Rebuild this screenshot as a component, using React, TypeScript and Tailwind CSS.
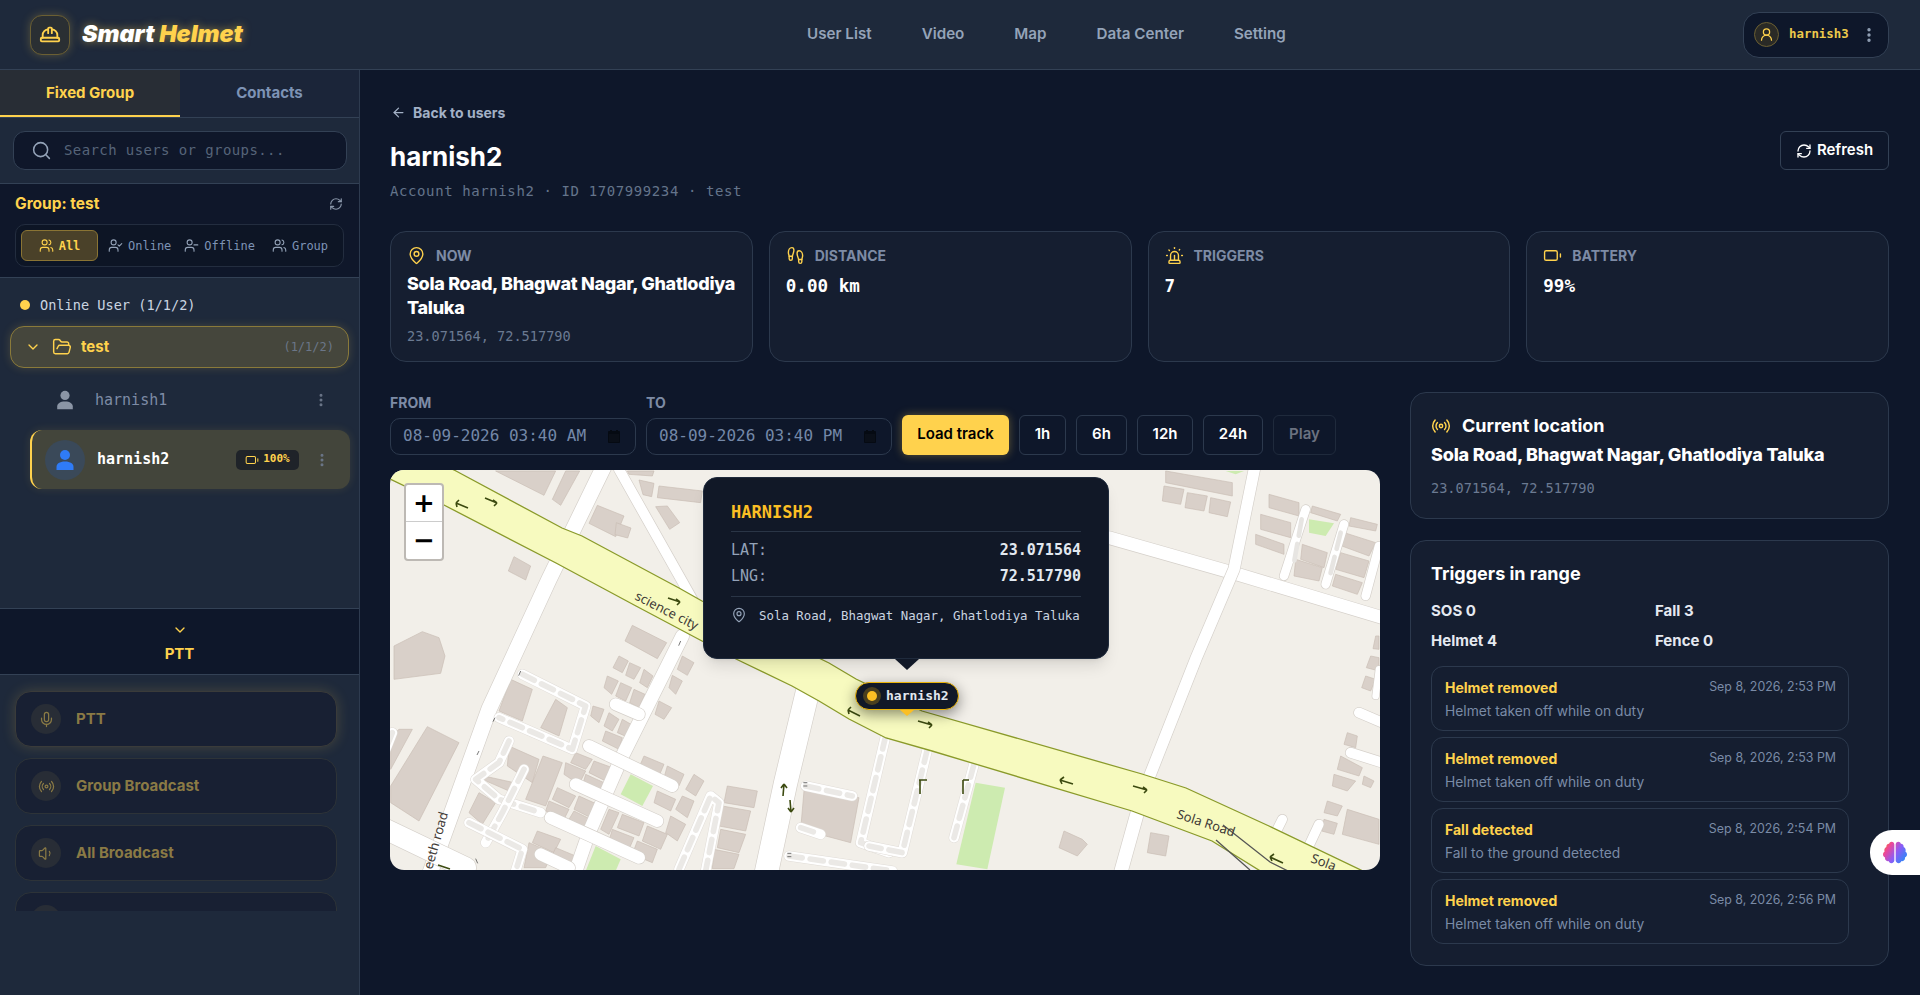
import React from "react";
import {
  ArrowLeft, Battery, ChevronDown, EllipsisVertical, FolderOpen, Footprints, HardHat, MapPin, Mic, Radio,
  RefreshCw, Search, Siren, User, UserCheck, UserMinus, UserRound, Users, Volume1,
} from "lucide-react";
import { FaBrain } from "react-icons/fa";

const mono = "font-['DejaVu_Sans_Mono','Liberation_Mono',monospace]";

function Person({ className }: { className: string }) {
  return (
    <svg viewBox="0 0 24 24" className={className} fill="currentColor">
      <circle cx="12" cy="7" r="5" />
      <path d="M3.5 22v-3c0-3.2 3-5.5 8.5-5.5s8.500 2.300 8.500 5.500v3z" />
    </svg>
  );
}

function StatCard({ icon, label, children }: { icon: React.ReactNode; label: string; children: React.ReactNode }) {
  return (
    <div className="flex-1 h-[131px] rounded-[16px] border border-[#2c394d] bg-[#151e30] px-4 pt-[12px]">
      <div className="flex items-center gap-[10px] h-[24px]">
        {icon}
        <span className="text-[14px] font-bold text-[#7d8ba5]">{label}</span>
      </div>
      {children}
    </div>
  );
}

function Road({ d, w, c = "#ffffff", s = "#d5d0ca" }: { d: string; w: number; c?: string; s?: string }) {
  return (
    <g fill="none" strokeLinecap="round" strokeLinejoin="round">
      <path d={d} stroke={s} strokeWidth={w + 4} />
      <path d={d} stroke={c} strokeWidth={w} />
    </g>
  );
}

function Lane({ d }: { d: string }) {
  return (
    <g fill="none" strokeLinecap="round" strokeLinejoin="round">
      <path d={d} stroke="#e0dcd7" strokeWidth={32} />
      <path d={d} stroke="#ffffff" strokeWidth={29} />
      <path d={d} stroke="#ebe9e6" strokeWidth={17} strokeDasharray="40 24" />
    </g>
  );
}

const leftBuildings = [
  "320,15 500,15 465,88", "530,15 572,15 515,118 490,100", "625,118 705,150 680,212 600,172", "682,170 726,186 716,216 678,206",
  "715,15 795,15 790,30 720,25", "750,42 795,52 788,92 762,86", "810,60 940,75 935,110 805,95", "800,122 835,120 872,170 842,190",
  "375,272 425,300 410,342 358,315", "15,540 100,497 150,515 168,570 155,622 15,640", "730,478 833,530 805,578 708,525",
  "690,570 718,585 700,620 672,605", "722,590 755,605 735,640 710,628", "765,610 792,630 775,665 752,650", "655,630 688,645 668,685 645,665",
  "695,650 728,665 710,705 680,690", "735,670 768,685 750,725 722,710", "880,570 915,590 895,628 865,610", "850,628 880,645 860,685 840,665",
  "810,705 848,725 825,760 798,745", "612,720 645,730 630,770 605,750", "660,740 690,760 670,795 645,780", "700,760 735,780 720,815 685,800",
  "115,782 210,830 90,1065 5,1010 5,960", "30,790 70,790 5,910 5,812", "365,640 430,670 400,765 330,735", "500,700 535,725 510,810 455,785",
  "360,840 450,880 430,950 355,900", "285,930 375,950 360,975 280,940", "240,1040 270,980 320,1010 280,1075", "462,870 520,890 470,1020 410,1000",
  "505,965 560,990 540,1025 490,1000", "480,1005 540,1030 525,1060 470,1035", "570,990 625,1015 605,1055 555,1030", "555,1035 605,1060 590,1085 540,1060",
  "560,860 610,880 590,910 545,890", "615,885 670,905 650,945 600,920", "530,890 590,915 570,955 525,925", "590,925 645,950 625,985 580,960",
  "650,795 700,815 690,850 640,825", "765,870 825,895 810,930 750,905", "835,900 885,925 870,960 825,935", "915,925 945,945 920,990 890,970",
  "805,975 860,1000 845,1035 795,1010", "880,990 915,1005 895,1055 860,1030", "845,1050 890,1075 865,1125 830,1100", "700,1045 765,1070 750,1110 685,1085",
  "775,1080 835,1105 815,1150 760,1125", "660,1030 690,1040 660,1105 635,1090", "670,1090 735,1115 720,1150 660,1125", "745,1125 805,1150 790,1190 730,1165",
  "445,1095 515,1120 495,1160 430,1130", "420,1130 490,1160 470,1205 405,1205", "500,1145 560,1170 545,1205 480,1190",
  "1015,960 1105,975 1095,1025 1005,1010", "1000,1020 1085,1035 1070,1095 990,1080", "995,1090 1070,1105 1050,1160 985,1145", "975,1150 1050,1165 1035,1208 970,1208",
  "1245,975 1410,995 1385,1130 1235,1090",
];

const rightBuildings = [
  "855,60 915,70 905,115 850,105", "925,80 985,90 975,135 918,125", "995,95 1055,108 1045,152 990,140",
  "1270,235 1345,260 1335,305 1265,280", "1250,280 1330,305 1320,345 1245,330", "1380,195 1490,230 1470,270 1375,235", "1385,260 1470,285 1455,335 1370,310",
  "1370,325 1450,350 1435,385 1360,360", "1300,120 1385,145 1375,165 1295,140", "1415,155 1495,175 1490,195 1410,180",
  "860,15 1060,50 1060,90 860,50", "1130,205 1215,235 1215,265 1130,235", "1145,145 1235,170 1235,215 1145,190", "1170,85 1260,110 1260,150 1170,125",
  "1490,510 1500,510 1500,550 1482,548", "1475,570 1500,575 1500,615 1462,605", "1460,630 1490,640 1475,675 1448,665", "1405,800 1435,810 1430,845 1395,835",
  "1385,870 1450,905 1440,930 1375,910", "1365,925 1430,945 1405,975 1360,960", "1455,930 1485,945 1475,965 1450,955", "1345,1005 1390,1020 1375,1050 1335,1040",
  "1335,1060 1375,1072 1365,1105 1328,1095", "1405,1030 1500,1060 1500,1135 1390,1105", "555,1095 610,1120 625,1135 595,1170 540,1145", "815,1100 870,1110 860,1170 805,1160",
];

function MapDrawing() {
  return (
    <svg viewBox="0 0 990 400" className="absolute inset-0 h-full w-full">
      <rect width="990" height="400" fill="#f2efe9" />
      <g transform="translate(-1,-4) scale(0.33333)">
        {leftBuildings.map((p) => (
          <polygon key={p} points={p} fill="#d9d0c9" stroke="#c9bdb3" strokeWidth="2" />
        ))}
        <polygon points="725,925 792,960 760,1020 695,985" fill="#cdebb0" />
        <polygon points="620,1140 695,1180 680,1215 590,1215" fill="#cdebb0" />
        <Road d="M655 -20 L480 340 L300 730 L120 1230" w={46} />
        <Road d="M690 10 L910 400" w={30} />
        <Road d="M880 510 L700 870 L600 1100 L555 1230" w={40} />
        <Road d="M1255 680 L1190 950 L1130 1230" w={70} />
        <Road d="M-20 1085 L230 1205" w={62} />
        <Lane d="M400 625 L590 720 L550 850 L330 755" />
        <Lane d="M360 825 L330 890 L260 940 L330 1000 L455 1040" />
        <Lane d="M405 910 L340 1040 L290 1130" />
        <Lane d="M240 1070 L400 1150 L380 1215" />
        <Lane d="M10 800 L-10 850" />
        <Road d="M680 715 L750 745" w={36} />
        <Road d="M600 840 L850 960" w={36} />
        <Road d="M560 955 L805 1065" w={36} />
        <Road d="M485 1055 L750 1175" w={36} />
        <Road d="M455 1165 L540 1205" w={36} />
        <Lane d="M870 1210 L965 990 L990 1010 L950 1215" />
        <Lane d="M1250 960 L1390 990" />
        <Lane d="M1235 1085 L1295 1105" />
        <Lane d="M1490 810 L1415 1130 L1500 1160" />
        <Lane d="M1200 1170 L1510 1215" />
        <path d="M1243 950h12M1243 960h12M395 615l-6 14M318 755l-6 12M270 855l-6 12M875 525l-6 14M260 1178l6 14M1195 1162h12M1195 1172h12" fill="none" stroke="#333" strokeWidth="2" />
      </g>
      <g transform="translate(489,-4) scale(0.33333)">
        {rightBuildings.map((p) => (
          <polygon key={p} points={p} fill="#d9d0c9" stroke="#c9bdb3" strokeWidth="2" />
        ))}
        <polygon points="1290,160 1365,172 1340,210 1290,200" fill="#cdebb0" />
        <polygon points="290,950 378,965 325,1210 232,1195" fill="#cdebb0" />
        <polygon points="1040,15 1095,15 1070,25" fill="#cdebb0" />
        <Road d="M690 215 L1060 320 L1510 455" w={38} />
        <Road d="M1130 -10 L1065 310 L950 580 L810 935" w={34} />
        <Road d="M775 1040 L725 1220" w={40} />
        <Road d="M1280 130 L1215 330" w={26} />
        <Road d="M1395 175 L1340 355" w={26} />
        <Road d="M1500 240 L1460 390" w={26} />
        <Road d="M1440 740 L1510 770" w={30} />
        <Road d="M1415 860 L1510 890" w={30} />
        <Road d="M1500 610 L1490 690" w={20} />
        <Road d="M1210 1060 L1180 1120" w={28} />
        <Road d="M1320 1075 L1285 1150" w={28} />
        <Lane d="M145 850 L70 1160 L-30 1140" />
        <Lane d="M285 895 L225 1115" />
        <path d="M1268 160L1245 290M1385 200L1350 340" stroke="#e7e5e2" strokeWidth="14" strokeLinecap="round" strokeDasharray="50 25" fill="none" />
      </g>
      <path
        d="M-2,8 L52,34 L166,93 L246,136 L312,171 L346,189 L402,216 L429,231 L459,249 L496,268 L542,281 L742,341 L822,371 L872,402 L975,402 L879,356 L796,318 L752,304 L532,241 L466,209 L439,193 L312,131 L289,118 L192,66 L172,58 L66,1 L60,-2 L-2,-2 Z"
        fill="#f7fabf"
        stroke="#8a9a2a"
        strokeWidth="1.300"
      />
      <g stroke="#3c4a10" strokeWidth="1.600" fill="none">
        <path d="M66 33l12 5M66 33l3 -3M66 33l1 4" />
        <path d="M95 28l12 5M107 33l-4 -3M107 33l-3 3" />
        <path d="M278 128l12 4M290 132l-4 -3M290 132l-3 3" />
        <path d="M458 240l12 6M458 240l3 -3M458 240l1 4" />
        <path d="M528 251l14 4M542 255l-4 -3M542 255l-3 3" />
        <path d="M670 310l13 4M670 310l4 -3M670 310l2 4" />
        <path d="M743 316l14 4M757 320l-4 -3M757 320l-3 3" />
        <path d="M880 387l13 6M880 387l4 -3M880 387l2 4" />
        <path d="M48 395l12 4" />
        <path d="M394 314l-1 12M394 314l-3 4M394 314l3 4M400 330l1 12M401 342l-3 -4M401 342l3 -4" />
        <path d="M530 310v14M529 310h8M573 310v14M573 310h6" />
      </g>
      <path d="M833 355 L880 392 L900 402 M826 370 L860 400" fill="none" stroke="#555" strokeWidth="1.300" />
      <g fontFamily="'Noto Sans',sans-serif" fill="#3f3a36" fontSize="13">
        <text transform="translate(244,129) rotate(27)">science city</text>
        <text transform="translate(786,348) rotate(18)">Sola Road</text>
        <text transform="translate(920,392) rotate(20)">Sola</text>
        <text transform="translate(42,400) rotate(-74)">eeth road</text>
      </g>
    </svg>
  );
}

function MapPanel() {
  return (
    <div className="relative h-[400px] w-[990px] overflow-hidden rounded-[14px]">
      <MapDrawing />
      <div className="absolute left-[14px] top-[13px] w-[40px] rounded-[4px] border-2 border-[#bdb9b4] bg-white">
        <div className="flex h-[37px] items-center justify-center border-b border-[#ccc] font-['DejaVu_Sans',sans-serif] text-[26px] font-bold leading-none text-black">+</div>
        <div className="flex h-[37px] items-center justify-center font-['DejaVu_Sans',sans-serif] text-[26px] font-bold leading-none text-black">−</div>
      </div>
      <div className="absolute left-[313px] top-[7px] h-[182px] w-[406px] rounded-[14px] border border-[#1f2a3c] bg-[#111827] px-[27px] pt-[22px] shadow-lg">
        <div className={`${mono} border-b border-[#2a3546] pb-[7px] text-[17px] font-bold leading-[24px] text-[#fbbf24]`}>HARNISH2</div>
        <div className={`${mono} mt-[6px] flex h-[26px] items-center justify-between text-[15px] text-[#94a3b8]`}>
          <span>LAT:</span><span className="font-bold text-[#e2e8f0]">23.071564</span>
        </div>
        <div className={`${mono} flex h-[26px] items-center justify-between text-[15px] text-[#94a3b8]`}>
          <span>LNG:</span><span className="font-bold text-[#e2e8f0]">72.517790</span>
        </div>
        <div className="mt-[6px] border-t border-[#2a3546] pt-[9px]">
          <div className={`${mono} flex items-start gap-[12px] text-[12.4px] leading-[20px] text-[#cbd5e1]`}>
            <MapPin className="mt-[1px] h-[16px] w-[16px] shrink-0 text-[#94a3b8]" strokeWidth={1.75} />
            <span className="whitespace-nowrap">Sola Road, Bhagwat Nagar, Ghatlodiya Taluka</span>
          </div>
        </div>
      </div>
      <div className="absolute left-[505px] top-[189px] h-0 w-0 border-x-[12px] border-t-[11px] border-x-transparent border-t-[#111827]" />
      <div className="absolute left-[465px] top-[212px] flex h-[28px] w-[104px] items-center gap-[5px] rounded-full border border-[#eab308] bg-[#111827] pl-[7px] shadow-[0_4px_14px_rgba(0,0,0,0.45)]">
        <span className="flex h-[18px] w-[18px] items-center justify-center rounded-full bg-[#4a3f1e]">
          <span className="h-[10px] w-[10px] rounded-full bg-[#fbbf24]" />
        </span>
        <span className={`${mono} text-[13px] font-bold text-[#e2e8f0]`}>harnish2</span>
      </div>
      <div className="absolute left-[510px] top-[240px] h-0 w-0 border-x-[7px] border-t-[6px] border-x-transparent border-t-[#fbbf24]" />
    </div>
  );
}

function TriggerItem({ title, time, desc }: { title: string; time: string; desc: string }) {
  return (
    <div className="h-[65px] rounded-[12px] border border-[#2c394d] pl-[13px] pr-[12px] pt-[11px]">
      <div className="flex items-center justify-between h-[20px]">
        <span className="text-[14px] font-bold text-[#ffd24d]">{title}</span>
        <span className="text-[12.4px] text-[#7a8ba6]">{time}</span>
      </div>
      <div className="mt-[3px] text-[13.8px] leading-[20px] text-[#7a8ba6]">{desc}</div>
    </div>
  );
}

function PttButton({ icon, label, glow }: { icon: React.ReactNode; label: string; glow?: boolean }) {
  return (
    <div className={`flex h-[56px] shrink-0 items-center gap-[15px] rounded-[16px] border bg-[#182033] pl-[15px] ${glow ? "border-[#3a3b3a] shadow-[0_0_14px_rgba(255,210,77,0.18)]" : "border-[#2d3338]"}`}>
      <span className="flex h-[30px] w-[30px] items-center justify-center rounded-full bg-[#282d36] text-[#8a7a45]">{icon}</span>
      <span className="text-[15px] font-bold text-[#8a7a45]">{label}</span>
    </div>
  );
}

function CalendarGlyph() {
  return (
    <svg viewBox="0 0 12 13" className="h-[13px] w-[12px]">
      <rect y="1" width="12" height="12" rx="1" fill="#050a12" />
      <rect x="1" y="4" width="10" height="8" fill="#0a0f18" />
      <rect x="2" y="0" width="2" height="2" fill="#050a12" />
      <rect x="8" y="0" width="2" height="2" fill="#050a12" />
    </svg>
  );
}

export default function App() {
  return (
    <div className="flex h-[995px] w-[1920px] flex-col overflow-hidden bg-[#0e172a] font-['Inter',sans-serif]">
      <header className="flex h-[70px] shrink-0 items-center border-b border-[#334155] bg-[#1e293b] pl-[30px] pr-[31px]">
        <div className="flex w-[777px] items-center gap-[12px]">
          <div className="flex h-[40px] w-[40px] items-center justify-center rounded-[12px] border border-[#6b5f33] bg-[#2a2f33] shadow-[0_0_10px_rgba(255,210,77,0.25)]">
            <HardHat className="h-[22px] w-[22px] text-[#ffd24d]" strokeWidth={2} />
          </div>
          <div className="text-[23.3px] font-black italic text-white [text-shadow:0_0_8px_rgba(255,210,77,0.5)]">
            Smart <span className="text-[#ffd24d]">Helmet</span>
          </div>
        </div>
        <nav className="flex items-center gap-[50px] text-[15.2px] font-semibold text-[#94a3b8]">
          <span>User List</span><span>Video</span><span>Map</span><span>Data Center</span><span>Setting</span>
        </nav>
        <div className="ml-auto flex h-[46px] w-[146px] items-center rounded-[16px] border border-[#334155] bg-[#0e172a] pl-[10px]">
          <span className="flex h-[25px] w-[25px] items-center justify-center rounded-full border border-[#6b5f33] bg-[#2a2a26]">
            <UserRound className="h-[15px] w-[15px] text-[#ffd24d]" strokeWidth={2} />
          </span>
          <span className={`${mono} ml-[10px] text-[12.4px] font-bold text-[#ecc94b]`}>harnish3</span>
          <EllipsisVertical className="ml-[11px] h-[18px] w-[18px] text-[#94a3b8]" strokeWidth={2.5} />
        </div>
      </header>

      <div className="flex min-h-0 flex-1">
        <aside className="flex w-[360px] shrink-0 flex-col border-r border-[#2e3b4f] bg-[#1e293b]">
          <div className="flex h-[48px] shrink-0 border-b border-[#334155]">
            <div className="flex w-[180px] items-center justify-center border-b-2 border-[#ffd24d] bg-[#282d35] pt-[1px] text-[15px] font-bold text-[#ffd24d]">Fixed Group</div>
            <div className="flex flex-1 items-center justify-center bg-[#1b2539] text-[15px] font-bold text-[#7d93b5]">Contacts</div>
          </div>
          <div className="h-[66px] shrink-0 border-b border-[#334155] px-[13px] pt-[13px]">
            <div className="flex h-[39px] w-[334px] items-center rounded-[12px] border border-[#334155] bg-[#0f172a] pl-[17px]">
              <Search className="h-[21px] w-[21px] text-[#94a3b8]" strokeWidth={1.75} />
              <span className={`${mono} ml-[12px] text-[14px] tracking-[0.4px] text-[#566479]`}>Search users or groups...</span>
            </div>
          </div>
          <div className="h-[94px] shrink-0 border-b border-[#334155] bg-[#0f172a] px-[15px] pt-[10px]">
            <div className="flex h-[20px] items-center justify-between pr-[1px]">
              <span className="text-[15.5px] font-bold text-[#ffd24d]">Group: test</span>
              <RefreshCw className="h-[14px] w-[14px] text-[#8a97aa]" strokeWidth={2} />
            </div>
            <div className="mt-[10px] flex h-[43px] w-[329px] items-center rounded-[10px] border border-[#232d3f] bg-[#0d1525] pl-[5px]">
              <div className={`${mono} flex h-[31px] w-[77px] items-center justify-center gap-[5px] rounded-[6px] border border-[#8a7434] bg-[#4a4129] text-[12px] font-bold text-[#ffd24d]`}>
                <Users className="h-[15px] w-[15px]" strokeWidth={1.75} />All
              </div>
              <div className={`${mono} ml-[10px] flex items-center gap-[5px] text-[12px] text-[#7d93b5]`}>
                <UserCheck className="h-[15px] w-[15px] text-[#94a3b8]" strokeWidth={1.75} />Online
              </div>
              <div className={`${mono} ml-[13px] flex items-center gap-[5px] text-[12px] text-[#7d93b5]`}>
                <UserMinus className="h-[15px] w-[15px] text-[#94a3b8]" strokeWidth={1.75} />Offline
              </div>
              <div className={`${mono} ml-[17px] flex items-center gap-[5px] text-[12px] text-[#7d93b5]`}>
                <Users className="h-[15px] w-[15px] text-[#94a3b8]" strokeWidth={1.75} />Group
              </div>
            </div>
          </div>

          <div className="h-[330px] shrink-0 px-[10px] pt-[17px]">
            <div className="flex h-[20px] items-center gap-[10px] pl-[10px]">
              <span className="h-[10px] w-[10px] rounded-full bg-[#ffd24d]" />
              <span className={`${mono} text-[13.6px] text-[#cbd5e1]`}>Online User (1/1/2)</span>
            </div>
            <div className="mt-[11px] flex h-[42px] w-[339px] items-center rounded-[14px] border border-[#8a7a3a] bg-[#45463c] pl-[14px] pr-[14px] shadow-[0_0_10px_rgba(255,210,77,0.18)]">
              <ChevronDown className="h-[16px] w-[16px] text-[#ffd24d]" strokeWidth={2} />
              <FolderOpen className="ml-[11px] h-[20px] w-[20px] text-[#ffd24d]" strokeWidth={1.75} />
              <span className="ml-[9px] text-[15px] font-bold text-[#ffd24d]">test</span>
              <span className={`${mono} ml-auto text-[12px] text-[#6b7688]`}>(1/1/2)</span>
            </div>
            <div className="mt-[10px] flex h-[44px] items-center pl-[44px]">
              <Person className="h-[22px] w-[22px] text-[#8b95a5]" />
              <span className={`${mono} ml-[19px] text-[15px] text-[#7d8ba5]`}>harnish1</span>
              <EllipsisVertical className="ml-auto mr-[20px] h-[16px] w-[16px] text-[#6b7688]" strokeWidth={2.5} />
            </div>
            <div className="ml-[20px] mt-[8px] flex h-[59px] w-[320px] items-center rounded-[12px] border-l-2 border-[#ffd24d] bg-[#43453b] pl-[13px] shadow-[0_0_10px_rgba(255,210,77,0.12)]">
              <span className="flex h-[40px] w-[40px] items-center justify-center rounded-full bg-[#3a4959]">
                <Person className="h-[24px] w-[24px] text-[#2f7bf6]" />
              </span>
              <span className={`${mono} ml-[12px] flex-1 text-[15px] font-bold text-white`}>harnish2</span>
              <span className={`${mono} flex h-[20px] w-[63px] items-center justify-center gap-[4px] rounded-[5px] bg-[#1f2329] text-[11px] font-bold text-[#ffd24d]`}>
                <Battery className="h-[14px] w-[14px]" strokeWidth={1.75} />100%
              </span>
              <EllipsisVertical className="ml-[15px] mr-[20px] h-[16px] w-[16px] text-[#6b7688]" strokeWidth={2.5} />
            </div>
          </div>

          <div className="flex h-[67px] shrink-0 flex-col items-center border-y border-[#334155] bg-[#0e172a] pt-[13px]">
            <ChevronDown className="h-[16px] w-[16px] text-[#ffd24d]" strokeWidth={2} />
            <span className="mt-[7px] text-[15px] font-bold leading-[18px] text-[#ffd24d]">PTT</span>
          </div>

          <div className="flex h-[236px] shrink-0 flex-col gap-[11px] overflow-hidden pl-[15px] pr-[22px] pt-[16px]">
            <PttButton glow label="PTT" icon={<Mic className="h-[17px] w-[17px]" strokeWidth={1.75} />} />
            <PttButton label="Group Broadcast" icon={<Radio className="h-[17px] w-[17px]" strokeWidth={1.75} />} />
            <PttButton label="All Broadcast" icon={<Volume1 className="h-[17px] w-[17px]" strokeWidth={1.75} />} />
            <PttButton label="" icon={<User className="h-[17px] w-[17px]" strokeWidth={1.75} />} />
          </div>
        </aside>

        <main className="relative flex-1 pl-[30px] pr-[31px] pt-[31px]">
          <div className="flex h-[22px] items-center gap-[7px] text-[14px] font-bold text-[#a3b1c6]">
            <ArrowLeft className="ml-[1px] h-[15px] w-[15px]" strokeWidth={2} />Back to users
          </div>
          <div className="mt-[18px] flex items-start justify-between">
            <div>
              <h1 className="text-[26px] font-bold leading-[32px] text-white">harnish2</h1>
              <p className={`${mono} mt-[8px] text-[14px] leading-[20px] tracking-[0.6px] text-[#64748b]`}>Account harnish2 · ID 1707999234 · test</p>
            </div>
            <div className="mt-[-10px] flex h-[39px] w-[109px] items-center justify-center gap-[5px] rounded-[6px] border border-[#334155] text-[15px] font-semibold text-white">
              <RefreshCw className="h-[16px] w-[16px]" strokeWidth={2} />Refresh
            </div>
          </div>

          <div className="mt-[29.5px] flex gap-4">
            <StatCard label="NOW" icon={<MapPin className="h-[19px] w-[19px] text-[#ffd24d]" strokeWidth={1.75} />}>
              <div className="mt-[4px] text-[18px] font-extrabold leading-[24px] tracking-[-0.3px] text-white">Sola Road, Bhagwat Nagar, Ghatlodiya Taluka</div>
              <div className={`${mono} mt-[6px] text-[13.6px] leading-[20px] text-[#6b7a92]`}>23.071564, 72.517790</div>
            </StatCard>
            <StatCard label="DISTANCE" icon={<Footprints className="h-[19px] w-[19px] text-[#ffd24d]" strokeWidth={1.75} />}>
              <div className={`${mono} mt-[6px] text-[17.6px] font-bold leading-[24px] text-white`}>0.00 km</div>
            </StatCard>
            <StatCard label="TRIGGERS" icon={<Siren className="h-[19px] w-[19px] text-[#ffd24d]" strokeWidth={1.75} />}>
              <div className={`${mono} mt-[6px] text-[17.6px] font-bold leading-[24px] text-white`}>7</div>
            </StatCard>
            <StatCard label="BATTERY" icon={<Battery className="h-[19px] w-[19px] text-[#ffd24d]" strokeWidth={1.75} />}>
              <div className={`${mono} mt-[6px] text-[17.6px] font-bold leading-[24px] text-white`}>99%</div>
            </StatCard>
          </div>

          <div className="mt-[30px] flex gap-[30px]">
            <div className="w-[990px] shrink-0">
              <div className="flex h-[63px] items-end">
                <div className="w-[246px]">
                  <div className="text-[14px] font-bold leading-[18px] text-[#7d8ba5]">FROM</div>
                  <div className={`${mono} mt-[6px] flex h-[37px] items-center justify-between rounded-[10px] border border-[#2c394d] pl-[12px] pr-[15px] text-[16px] text-[#7488a8]`}>
                    <span className="whitespace-pre">08-09-2026 03:40 AM</span>
                    <CalendarGlyph />
                  </div>
                </div>
                <div className="ml-[10px] w-[246px]">
                  <div className="text-[14px] font-bold leading-[18px] text-[#7d8ba5]">TO</div>
                  <div className={`${mono} mt-[6px] flex h-[37px] items-center justify-between rounded-[10px] border border-[#2c394d] pl-[12px] pr-[15px] text-[16px] text-[#7488a8]`}>
                    <span className="whitespace-pre">08-09-2026 03:40 PM</span>
                    <CalendarGlyph />
                  </div>
                </div>
                <div className="ml-[10px] flex h-[40px] w-[107px] items-center justify-center rounded-[6px] bg-[#ffd24d] text-[15px] font-semibold text-black shadow-[0_0_10px_rgba(255,210,77,0.35)]">Load track</div>
                <div className="ml-[10px] flex h-[40px] w-[47px] items-center justify-center rounded-[6px] border border-[#2c394d] text-[15px] font-semibold text-white">1h</div>
                <div className="ml-[10px] flex h-[40px] w-[51px] items-center justify-center rounded-[6px] border border-[#2c394d] text-[15px] font-semibold text-white">6h</div>
                <div className="ml-[10px] flex h-[40px] w-[56px] items-center justify-center rounded-[6px] border border-[#2c394d] text-[15px] font-semibold text-white">12h</div>
                <div className="ml-[10px] flex h-[40px] w-[60px] items-center justify-center rounded-[6px] border border-[#2c394d] text-[15px] font-semibold text-white">24h</div>
                <div className="ml-[10px] flex h-[40px] w-[63px] items-center justify-center rounded-[6px] border border-[#1f2a3c] text-[15px] font-semibold text-[#6b7280]">Play</div>
              </div>
              <div className="mt-[15px]"><MapPanel /></div>
            </div>

            <div className="flex w-[479px] shrink-0 flex-col gap-[21px]">
              <div className="h-[127px] rounded-[16px] border border-[#2c394d] bg-[#151e30] px-[20px] pt-[22px]">
                <div className="flex h-[22px] items-center gap-[11px]">
                  <Radio className="h-[20px] w-[20px] text-[#ffd24d]" strokeWidth={1.75} />
                  <span className="text-[18px] font-bold text-white">Current location</span>
                </div>
                <div className="mt-[6px] text-[18px] font-extrabold leading-[24px] tracking-[-0.2px] text-white">Sola Road, Bhagwat Nagar, Ghatlodiya Taluka</div>
                <div className={`${mono} mt-[12px] text-[13.6px] leading-[18px] text-[#6b7a92]`}>23.071564, 72.517790</div>
              </div>
              <div className="h-[426px] rounded-[16px] border border-[#2c394d] bg-[#151e30] pl-[20px] pr-[39px] pt-[21px]">
                <div className="text-[18px] font-bold leading-[24px] text-white">Triggers in range</div>
                <div className="mt-[15px] grid grid-cols-[224px_1fr] gap-y-[10px] text-[15px] font-bold leading-[20px] text-[#e5e9f0]">
                  <span>SOS 0</span><span>Fall 3</span><span>Helmet 4</span><span>Fence 0</span>
                </div>
                <div className="mt-[15px] flex flex-col gap-[6px]">
                  <TriggerItem title="Helmet removed" time="Sep 8, 2026, 2:53 PM" desc="Helmet taken off while on duty" />
                  <TriggerItem title="Helmet removed" time="Sep 8, 2026, 2:53 PM" desc="Helmet taken off while on duty" />
                  <TriggerItem title="Fall detected" time="Sep 8, 2026, 2:54 PM" desc="Fall to the ground detected" />
                  <TriggerItem title="Helmet removed" time="Sep 8, 2026, 2:56 PM" desc="Helmet taken off while on duty" />
                </div>
              </div>
            </div>
          </div>

          <div className="absolute right-0 top-[760px] flex h-[45px] w-[50px] items-center rounded-l-[22px] bg-white pl-[13px]">
            <svg className="absolute h-0 w-0"><defs><linearGradient id="brainGrad" x1="0" y1="0" x2="1" y2="0.6"><stop offset="0" stopColor="#f97316" /><stop offset="0.3" stopColor="#ec4899" /><stop offset="0.65" stopColor="#8b5cf6" /><stop offset="1" stopColor="#3b82f6" /></linearGradient></defs></svg>
            <FaBrain className="h-[23px] w-[24px]" fill="url(#brainGrad)" />
          </div>
        </main>
      </div>
    </div>
  );
}
